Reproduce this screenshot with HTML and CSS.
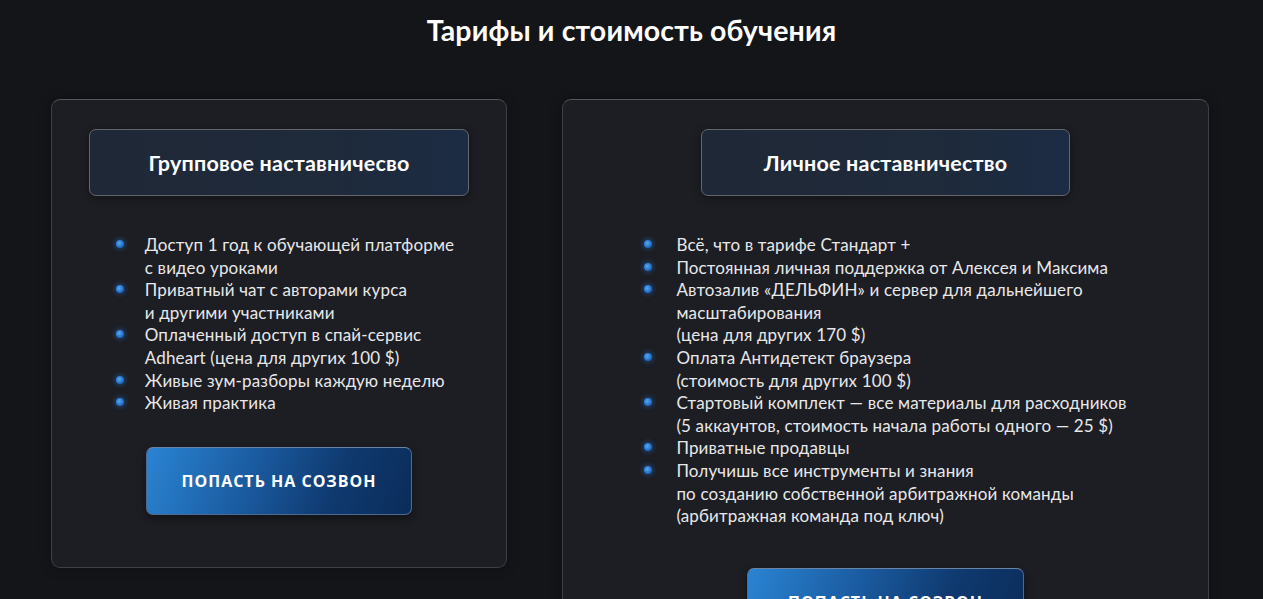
FILE: index.html
```html
<!DOCTYPE html>
<html lang="ru">
<head>
<meta charset="utf-8">
<title>Тарифы и стоимость обучения</title>
<link rel="stylesheet" href="styles.css">
</head>
<body>
<main class="pricing">
  <h2 class="pricing__title">Тарифы и стоимость обучения</h2>
  <div class="pricing__cards">
    <article class="card card--group">
      <div class="card__head card__head--group">Групповое наставничесво</div>
      <ul class="card__list">
        <li class="card__item"><span class="dot"></span><span>Доступ 1 год к обучающей платформе<br>с видео уроками</span></li>
        <li class="card__item"><span class="dot"></span><span>Приватный чат с авторами курса<br>и другими участниками</span></li>
        <li class="card__item"><span class="dot"></span><span>Оплаченный доступ в спай-сервис<br>Adheart (цена для других 100 $)</span></li>
        <li class="card__item"><span class="dot"></span><span>Живые зум-разборы каждую неделю</span></li>
        <li class="card__item"><span class="dot"></span><span>Живая практика</span></li>
      </ul>
      <a class="btn btn--group" href="#">ПОПАСТЬ НА СОЗВОН</a>
    </article>
    <article class="card card--personal">
      <div class="card__head card__head--personal">Личное наставничество</div>
      <ul class="card__list">
        <li class="card__item"><span class="dot"></span><span>Всё, что в тарифе Стандарт +</span></li>
        <li class="card__item"><span class="dot"></span><span>Постоянная личная поддержка от Алексея и Максима</span></li>
        <li class="card__item"><span class="dot"></span><span>Автозалив «ДЕЛЬФИН» и сервер для дальнейшего<br>масштабирования<br>(цена для других 170 $)</span></li>
        <li class="card__item"><span class="dot"></span><span>Оплата Антидетект браузера<br>(стоимость для других 100 $)</span></li>
        <li class="card__item"><span class="dot"></span><span>Стартовый комплект — все материалы для расходников<br>(5 аккаунтов, стоимость начала работы одного — 25 $)</span></li>
        <li class="card__item"><span class="dot"></span><span>Приватные продавцы</span></li>
        <li class="card__item"><span class="dot"></span><span>Получишь все инструменты и знания<br>по созданию собственной арбитражной команды<br>(арбитражная команда под ключ)</span></li>
      </ul>
      <a class="btn btn--personal" href="#">ПОПАСТЬ НА СОЗВОН</a>
    </article>
  </div>
</main>
</body>
</html>
```
FILE: styles.css
```css
* { box-sizing: border-box; }
html, body { margin: 0; padding: 0; }
body {
  background: #141519;
  color: #ffffff;
  font-family: "Lato", "Noto Sans", sans-serif;
  overflow: hidden;
}
.pricing {
  display: flex;
  flex-direction: column;
  align-items: center;
  padding-top: 11px;
}
.pricing__title {
  margin: 0;
  font-size: 28.5px;
  line-height: 38px;
  font-weight: 700;
  color: #fff;
  letter-spacing: 0.15px;
}
.pricing__cards {
  display: flex;
  align-items: flex-start;
  gap: 55px;
  margin-top: 50px;
  padding-right: 3px;
}
.card {
  display: flex;
  flex-direction: column;
  align-items: center;
  background: #1d1e23;
  border: 1px solid #3d3f45;
  border-top-color: #55575d;
  border-radius: 9px;
  padding: 29px 37px 52px;
  box-shadow: 0 0 12px rgba(0,0,0,0.35);
}
.card--group { width: 456px; }
.card--personal { width: 647px; }
.card__head {
  display: flex;
  align-items: center;
  justify-content: center;
  height: 67px;
  border: 1px solid #63666d;
  border-radius: 7px;
  background: linear-gradient(90deg, #1f2837 0%, #1f2a3a 60%, #1c2c44 100%);
  font-size: 21.5px;
  font-weight: 700;
  letter-spacing: 0.2px;
  color: #fff;
  box-shadow: 0 2px 8px rgba(0,0,0,0.4);
}
.card__head--group { width: 380px; }
.card__head--personal { width: 369px; }
.card__list {
  list-style: none;
  margin: 38px auto 0;
  padding: 0;
  width: fit-content;
}
.card--group .card__list { padding-left: 12px; }
.card__item {
  display: flex;
  align-items: flex-start;
  gap: 21px;
  font-size: 17px;
  line-height: 22.6px;
  letter-spacing: 0.15px;
  color: #e8e8ea;
}
.card--personal .card__item { gap: 24px; }
.dot {
  flex: none;
  width: 8px;
  height: 8px;
  margin-top: 6px;
  border-radius: 50%;
  background: radial-gradient(circle at 40% 40%, #5aa8f0 0%, #1f6fc8 60%, #164f96 100%);
  box-shadow: 0 0 5px 1px rgba(40,110,210,0.55);
}
.btn {
  display: flex;
  align-items: center;
  justify-content: center;
  height: 68px;
  border-radius: 7px;
  border: 1px solid #4d6b92;
  border-top-color: #6a84a6;
  background: linear-gradient(110deg, #2a84d3 0%, #1a5a9f 40%, #0f3a70 70%, #0b2c5a 100%);
  color: #fff;
  font-family: "Open Sans", "Lato", sans-serif;
  font-weight: 700;
  font-size: 16px;
  letter-spacing: 1px;
  text-decoration: none;
  box-shadow: 0 4px 10px rgba(0,0,0,0.4);
}
.btn--group { width: 266px; margin-top: 32px; }
.btn--personal { width: 277px; margin-top: 40px; }
```
